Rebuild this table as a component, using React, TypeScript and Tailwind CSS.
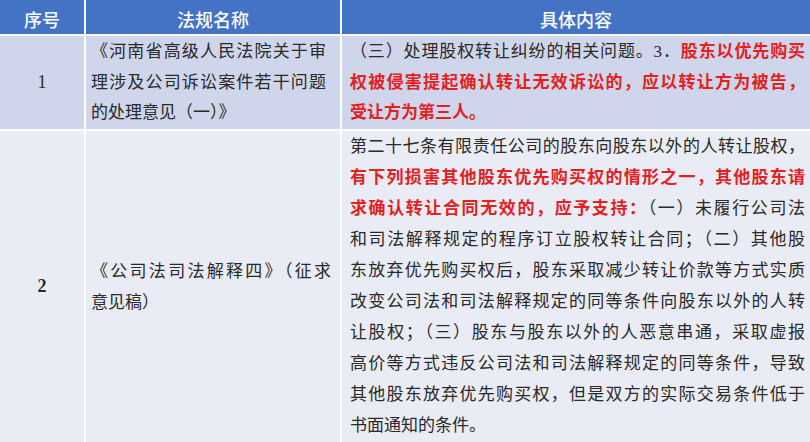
import React from "react";

type Seg = { t: string; red?: boolean };
type Line = Seg[];

const row1Content: Line[] = [
  [{ t: "（三）处理股权转让纠纷的相关问题。3．" }, { t: "股东以优先购买", red: true }],
  [{ t: "权被侵害提起确认转让无效诉讼的，应以转让方为被告，", red: true }],
  [{ t: "受让方为第三人。", red: true }],
];

const row2Content: Line[] = [
  [{ t: "第二十七条有限责任公司的股东向股东以外的人转让股权，" }],
  [{ t: "有下列损害其他股东优先购买权的情形之一，其他股东请", red: true }],
  [{ t: "求确认转让合同无效的，应予支持：", red: true }, { t: "（一）未履行公司法" }],
  [{ t: "和司法解释规定的程序订立股权转让合同；（二）其他股" }],
  [{ t: "东放弃优先购买权后，股东采取减少转让价款等方式实质" }],
  [{ t: "改变公司法和司法解释规定的同等条件向股东以外的人转" }],
  [{ t: "让股权；（三）股东与股东以外的人恶意串通，采取虚报" }],
  [{ t: "高价等方式违反公司法和司法解释规定的同等条件，导致" }],
  [{ t: "其他股东放弃优先购买权，但是双方的实际交易条件低于" }],
  [{ t: "书面通知的条件。" }],
];

function Lines({ lines }: { lines: Line[] }) {
  return (
    <>
      {lines.map((line, i) => (
        <div
          key={i}
          className={
            i === lines.length - 1
              ? "text-left"
              : "text-justify [text-align-last:justify]"
          }
        >
          {line.map((s, j) =>
            s.red ? (
              <span key={j} className="font-bold text-[#e3211f]">
                {s.t}
              </span>
            ) : (
              <span key={j}>{s.t}</span>
            )
          )}
        </div>
      ))}
    </>
  );
}

export default function App() {
  return (
    <div className="w-[810px] h-[442px] overflow-hidden bg-white font-['Liberation_Serif','Noto_Sans_CJK_SC',sans-serif] text-[#2a2a2a]">
      <div className="grid grid-cols-[84px_254px_1fr] gap-[2px] bg-white">
        {/* Header */}
        <div className="h-[34px] bg-[#4472c4] flex items-center justify-center pt-[8px] text-white text-[18px] font-medium leading-none">
          序号
        </div>
        <div className="h-[34px] bg-[#4472c4] flex items-center justify-center pt-[8px] text-white text-[18px] font-medium leading-none">
          法规名称
        </div>
        <div className="h-[34px] bg-[#4472c4] flex items-center justify-center pt-[8px] text-white text-[18px] font-medium leading-none">
          具体内容
        </div>

        {/* Row 1 */}
        <div className="bg-[#cfd5ea] flex items-center justify-center text-[18px]">
          1
        </div>
        <div className="bg-[#cfd5ea] pl-[5px] pr-[14px] pt-[1px] text-[17px] leading-[30.5px]">
          <Lines
            lines={[
              [{ t: "《河南省高级人民法院关于审" }],
              [{ t: "理涉及公司诉讼案件若干问题" }],
              [{ t: "的处理意见（一）》" }],
            ]}
          />
        </div>
        <div className="bg-[#cfd5ea] pl-[8px] pr-[5px] pt-[1px] text-[17px] leading-[30.5px]">
          <Lines lines={row1Content} />
        </div>

        {/* Row 2 */}
        <div className="bg-[#e9ebf5] flex items-center justify-center text-[18px] font-bold">
          2
        </div>
        <div className="bg-[#e9ebf5] flex flex-col justify-center pl-[5px] pr-[9px] text-[17px] leading-[31px]">
          <Lines
            lines={[
              [{ t: "《公司法司法解释四》（征求" }],
              [{ t: "意见稿）" }],
            ]}
          />
        </div>
        <div className="bg-[#e9ebf5] pl-[8px] pr-[5px] pb-[2px] text-[17px] leading-[31px]">
          <Lines lines={row2Content} />
        </div>
      </div>
    </div>
  );
}
